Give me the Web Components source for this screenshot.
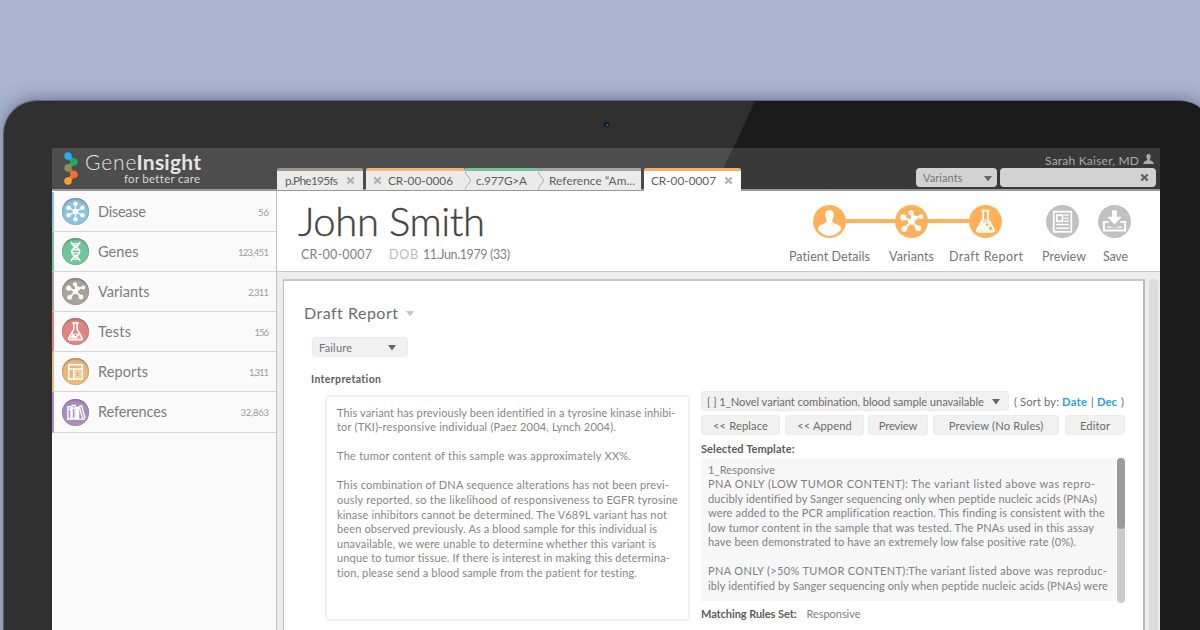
<!DOCTYPE html>
<html lang="en"><head><meta charset="utf-8"><title>GeneInsight</title>
<style>
html,body{margin:0;height:630px;width:1200px;overflow:hidden}
body{background:#a9b4d1;font-family:Lato,"Open Sans",sans-serif;color:#757575}
</style></head><body>
<gi-monitor></gi-monitor>
<script>
const ICONS={
disease:'<g fill="#fff" stroke="#fff" stroke-width="1.5"><path d="M16 16V7M16 16V25M16 16L8 11.5M16 16L24 11.5M16 16L8 20.5M16 16L24 20.5"/><circle cx="16" cy="16" r="2.6"/><g stroke="none"><circle cx="16" cy="6.8" r="2.7"/><circle cx="16" cy="25.2" r="2.7"/><circle cx="7.8" cy="11.5" r="2.7"/><circle cx="24.2" cy="11.5" r="2.7"/><circle cx="7.8" cy="20.5" r="2.7"/><circle cx="24.2" cy="20.5" r="2.7"/></g></g>',
genes:'<g fill="none" stroke="#fff" stroke-width="2"><path d="M11 4.5C11 11 21 10 21 16S11 21 11 27.5"/><path d="M21 4.5C21 11 12 10 11.5 16S21 21 21 27.5"/><path d="M12 7h8M13 9.5h6M13 14h6M12.5 17.5h7M13 22.5h6M12 25h8" stroke-width="1.4"/></g>',
variants:'<g fill="#fff" stroke="#fff" stroke-width="2"><path d="M15.5 16L8 11.5M15.5 16L9 23.5M15.5 16L23 22.5M15.5 16L18.5 12.5L15.5 6.8M18.5 12.5L25.5 11"/><g stroke="none"><circle cx="16" cy="16" r="3.2"/><circle cx="8" cy="12" r="3"/><circle cx="9" cy="23" r="2.9"/><circle cx="22.5" cy="22.5" r="2.9"/><circle cx="15.5" cy="7.5" r="2.5"/><circle cx="19.5" cy="12.5" r="2.3"/><circle cx="25.2" cy="11.3" r="2.3"/></g></g>',
flask:'<path d="M12.2 5.4h7.6M13.7 6v7.5L8 23.5Q7 26 9.5 26h13Q25 26 24 23.5L18.300 13.500V6" fill="none" stroke="#fff" stroke-width="1.8"/><path d="M12.500 17h7l4 7.500q-.5.500-1.500.500h-12q-1 0-1.500-.500z" fill="#fff"/><path d="M13.500 13.500h5l2 4h-9z" fill="#fff" fill-opacity=".5"/><circle cx="17.500" cy="19" r="1.400" fill="var(--d)"/><circle cx="21" cy="22.800" r="1.700" fill="var(--d)"/>',
tests:'<path d="M12.200 5.800h7.600M14 6v7.500L8.200 23.500Q7.200 25.800 9.500 25.800h13Q24.800 25.800 23.800 23.500L18 13.500V6" fill="none" stroke="#fff" stroke-width="1.900"/><path d="M12.500 18.500h7l3 5.800h-13z" fill="#fff"/><circle cx="16" cy="20" r="1.300" fill="var(--d)"/><circle cx="19.800" cy="22.500" r="1.500" fill="var(--d)"/>',
reports:'<g fill="none" stroke="#fff" stroke-width="1.800"><rect x="8" y="8" width="16" height="17"/><path d="M8 13h16M14 13v12" stroke-width="1.800"/><rect x="16.500" y="15.500" width="4.800" height="7" stroke-width="1.200" stroke-opacity=".6"/></g>',
references:'<g fill="none" stroke="#fff" stroke-width="1.600"><path d="M7 9h3.500v14H7zM12 7.500h3.500V23H12zM7 12.500h3.500M12 11h3.500"/><path d="M17 10h2.700v13H17z" fill="#fff"/><path d="M20.500 8.800l2.800-.8 3.800 14-2.800.8z"/><path d="M5.500 24h21.500" stroke-width="1.200"/></g>',
patient:'<path d="M16 5.200c3 0 4.400 2 4.100 5-.2 2.300-1 3-1.400 4.300-.3 1.800.5 2.600 2.300 3.400 3.300 1.300 6.200 2.100 6.200 5.600C24.800 27.300 20.500 29.800 16 29.800S7.200 27.300 4.800 23.500c0-3.500 2.900-4.300 6.200-5.600 1.800-.8 2.600-1.600 2.300-3.400-.4-1.300-1.200-2-1.400-4.300-.3-3 1.100-5 4.100-5z" fill="#fff"/>',
preview:'<g fill="none" stroke="#fff" stroke-width="1.700"><rect x="7.500" y="6.500" width="17" height="19.500"/><rect x="10.500" y="9.800" width="5.500" height="6"/><path d="M17.800 9.700h4.200M17.800 12.700h4.200M17.800 15.700h4.200M10 19h12M10 22.500h12" stroke-width="1.400"/></g>',
save:'<path d="M13.700 5h4.600v6.500h4.700L16 18.800l-7-7.300h4.700z" fill="#fff"/><path d="M10.300 16.500H5.700v8.200h20.600v-8.200H21.700" fill="none" stroke="#fff" stroke-width="2"/><path d="M8.500 20.800h3.500l4 1.500 4-1.500H23.500V22H8.500z" fill="#fff"/>'
};
class Base extends HTMLElement{
  paint(html){const t=document.createElement('template');t.innerHTML=html;this.attachShadow({mode:'open'}).append(t.content.cloneNode(true));}
}
/* A single line of text tracked to a fixed measure. */
class GiText extends Base{
  connectedCallback(){
    if(this.shadowRoot)return;
    this.paint(`<style>:host{display:block;white-space:pre;flex:none}span{display:inline-block}</style><span><slot></slot></span>`);
    const w=+this.getAttribute('w');
    if(!w)return;
    this.style.width=w+'px';
    const s=this.shadowRoot.querySelector('span');
    s.style.letterSpacing='0.001px';
    const n=[...this.textContent].length;
    s.style.letterSpacing=((w-s.getBoundingClientRect().width)/Math.max(1,n-1)).toFixed(3)+'px';
  }
}
class GiIcon extends Base{
  connectedCallback(){if(this.shadowRoot)return;
    const s=this.getAttribute('size'),c=this.getAttribute('color'),inset=this.hasAttribute('inset');
    this.paint(`<style>:host{display:block;flex:none;width:${s}px;height:${s}px;border-radius:50%;background:${c};--d:${c};${inset?'box-shadow:inset 0 1.5px 1.5px rgba(90,90,90,.45),inset 0 0 1px rgba(60,60,60,.5)':''}}svg{display:block}</style><svg width="${s}" height="${s}" viewBox="0 0 32 32">${ICONS[this.getAttribute('name')]}</svg>`);}
}
class GiX extends Base{
  connectedCallback(){if(this.shadowRoot)return;
    this.paint(`<style>:host{display:block;flex:none;width:9px;height:9px}svg{display:block}</style><svg width="9" height="9" viewBox="0 0 9 9"><path d="M1.300 1.500L7.700 7.500M7.700 1.500L1.300 7.500" stroke="${this.getAttribute('color')||'#b0b0b0'}" stroke-width="2.300"/></svg>`);}
}
class GiTri extends Base{
  connectedCallback(){if(this.shadowRoot)return;
    this.paint(`<style>:host{display:block;flex:none;width:8px;height:5.500px;position:relative;top:1px}svg{display:block}</style><svg width="8" height="5.500" viewBox="0 0 8 5.500"><path d="M0 0H8L4 5.500z" fill="${this.getAttribute('color')||'#666'}"/></svg>`);}
}
class GiLogo extends Base{
  connectedCallback(){this.paint(`<style>:host{display:flex;width:225px;padding:4px 0 0 12px;box-sizing:border-box;color:#e4e4e4}
svg{flex:none;margin-right:6px}.n{display:flex;font-size:21px;line-height:20px;height:20px;font-weight:300;margin-left:1px}.n gi-text{height:20px}.n b{font-weight:700}.t{font-size:11.500px;line-height:13px;margin-left:40px;color:#d8d8d8}</style>
<svg width="14" height="33" viewBox="0 0 14 33"><path d="M4 4L10 10" stroke="#1fa8b0" stroke-width="4"/><path d="M10 10L4 16" stroke="#4c9a50" stroke-width="4"/><path d="M4 16L10 22.500" stroke="#b07a3c" stroke-width="4"/><path d="M10 22.500L4 29" stroke="#f47a2a" stroke-width="4"/><circle cx="4" cy="4" r="3.700" fill="#2aaeea"/><circle cx="10" cy="10" r="3.700" fill="#24a860"/><circle cx="4" cy="16" r="3.700" fill="#968a4e"/><circle cx="10" cy="22.500" r="3.800" fill="#f26b3a"/><circle cx="4" cy="29" r="3.800" fill="#fba02c"/></svg>
<div><div class="n"><gi-text w="51.500">Gene</gi-text><b><gi-text w="64.500">Insight</gi-text></b></div><div class="t"><gi-text w="76">for better care</gi-text></div></div>`)}
}
class GiTabs extends Base{
  connectedCallback(){this.paint(`<style>:host{display:flex;padding-top:20px;height:23px;font-size:11.800px;color:#606060}
.tab{display:flex;align-items:center;box-sizing:border-box;height:22px;border-top:3px solid var(--c);background:#ebebeb;padding-left:var(--p);width:var(--w);margin-right:var(--m,0);gap:8px;border-radius:2px 2px 0 0}
.tab gi-text{line-height:19px}.seg{border-radius:0}.tab.on{background:#fff;height:24px}.tab.on>*{margin-top:-2px}.ch{margin-left:-7px;width:8px;height:19px;flex:none}.seg{gap:3px}</style>
<div class="tab" style="--c:#a0948b;--w:86px;--p:8px;--m:3px"><gi-text w="53">p.Phe195fs</gi-text><gi-x></gi-x></div>
<div class="tab" style="--c:#edb877;--w:99px;--p:7px"><gi-x></gi-x><gi-text w="65" style="margin-left:-2px">CR-00-0006</gi-text></div>
<div class="tab seg" style="--c:#74c396;--w:73px;--p:7px"><svg class="ch" viewBox="0 0 8 19"><path d="M0 0C0 4 5 6 5.500 9.500C5 13 0 15 0 19" fill="none" stroke="#aaa"/></svg><gi-text w="51">c.977G&gt;A</gi-text></div>
<div class="tab seg" style="--c:#a3a3a3;--w:103px;--p:7px;--m:3px"><svg class="ch" viewBox="0 0 8 19"><path d="M0 0C0 4 5 6 5.500 9.500C5 13 0 15 0 19" fill="none" stroke="#aaa"/></svg><gi-text w="86">Reference “Am...</gi-text></div>
<div class="tab on" style="--c:#f8b060;--w:97px;--p:7px"><gi-text w="65">CR-00-0007</gi-text><gi-x></gi-x></div>`)}
}
class GiSearch extends Base{
  connectedCallback(){this.paint(`<style>:host{display:block;margin-left:auto;width:240px;margin-right:4px;padding-top:5px;font-size:12px;color:#ababab}
.u{display:flex;justify-content:flex-end;gap:4px;padding-right:2px;line-height:15px;height:15px}
.s{display:flex;gap:3px}.s div{background:#d2d2d2;height:19px;border-radius:4px;box-sizing:border-box;display:flex;align-items:center;justify-content:space-between;color:#777;font-size:11px}.a{width:81px;padding:0 5px 0 7px}.b{width:156px;padding:0 7px}.b gi-x{margin-left:auto}</style>
<div class="u"><gi-text w="94">Sarah Kaiser, MD</gi-text><svg width="11" height="12" viewBox="0 0 11 12"><path d="M5.500 1C8.600 1 7.600 5 6.800 6V7.300C9 8 10.600 8.500 10.600 11H.4C.4 8.500 2 8 4.200 7.300V6C3.400 5 2.400 1 5.500 1z" fill="#ababab"/></svg></div>
<div class="s"><div class="a"><gi-text w="39.500">Variants</gi-text><gi-tri color="#666"></gi-tri></div><div class="b"><gi-x color="#5f5f5f"></gi-x></div></div>`)}
}
class GiNav extends Base{
  connectedCallback(){
    const rows=[['disease','#8cc3e0','Disease',48,'56',11],['genes','#70c59b','Genes',40.500,'123,451',31],['variants','#a9a29b','Variants',51.500,'2,311',21],['tests','#de8681','Tests',33,'156',14.500],['reports','#eab877','Reports',50,'1,311',20],['references','#ab8dbf','References',69,'32,863',28.500]];
    this.paint(`<style>:host{display:block;width:224px;flex:none;background:#fafafa;border-right:1px solid #c4c4c4;padding-top:1px}
.r{display:flex;align-items:center;box-sizing:border-box;height:40.100px;border-bottom:1px solid #d6d6d6;border-left:2px solid var(--c);padding:0 7px 0 8px;font-size:14.500px;color:#7c7c7c}
.r>gi-text:nth-child(2){margin-left:9px;line-height:20px}.r>.n{margin-left:auto;font-size:9.600px;line-height:14px;color:#9c9c9c;padding-top:2px}</style>`+rows.map(r=>`<div class="r" style="--c:${r[1]}"><gi-icon name="${r[0]}" size="27" color="${r[1]}" inset></gi-icon><gi-text w="${r[3]}">${r[2]}</gi-text><gi-text class="n" w="${r[5]}">${r[4]}</gi-text></div>`).join(''))}
}
class GiPatient extends Base{
  connectedCallback(){
    const st=(n,c,l,w,m,d=0)=>`<div class="s" style="margin-left:${m}px;width:${w}px"><gi-icon name="${n}" size="33" color="${c}" style="margin-right:${d*2}px"></gi-icon><gi-text w="${w}">${l}</gi-text></div>`;
    this.paint(`<style>:host{display:flex;height:80px;background:#fff;border-bottom:1px solid #c9c9c9;position:relative}
.p{padding-left:21px;width:512px;box-sizing:border-box;flex:none}.p h1{font:300 40px/50px Lato,sans-serif;-webkit-text-stroke:.35px #444;margin:5px 0 0;color:#444;height:50px}
.i{display:flex;font-size:12.500px;line-height:17px;padding-left:3px;color:#808080}
.st{display:flex;padding-top:14px;position:relative}.s{display:flex;flex-direction:column;align-items:center;gap:10px;font-size:12.500px;line-height:17px;color:#757575;position:relative}
.line{position:absolute;left:41px;width:156px;top:28px;height:4px;background:#feb159}</style>
<div class="p"><h1><gi-text w="187">John Smith</gi-text></h1><div class="i"><gi-text w="71">CR-00-0007</gi-text><gi-text w="29" style="margin-left:17px;color:#bbb">DOB</gi-text><gi-text w="87" style="margin-left:5px">11.Jun.1979 (33)</gi-text></div></div>
<div class="st"><div class="line"></div>${st('patient','#feb159','Patient Details',81,0,.5)}${st('variants','#feb159','Variants',45,19)}${st('flask','#feb159','Draft Report',74,15,1)}${st('preview','#c1c1c1','Preview',44,19,2)}${st('save','#c1c1c1','Save',25,17,1)}</div>`)}
}
class GiEditor extends Base{
  connectedCallback(){
    const L=[['This variant has previously been identified in a tyrosine kinase inhibi-',338.500],['tor (TKI)-responsive individual (Paez 2004, Lynch 2004).',279],0,['The tumor content of this sample was approximately XX%.',294],0,['This combination of DNA sequence alterations has not been previ-',332],['ously reported, so the likelihood of responsiveness to EGFR tyrosine',341],['kinase inhibitors cannot be determined. The V689L variant has not',330],['been observed previously. As a blood sample for this individual is',320],['unavailable, we were unable to determine whether this variant is',319],['unque to tumor tissue. If there is interest in making this determina-',333],['tion, please send a blood sample from the patient for testing.',300]];
    this.paint(`<style>:host{display:block;width:378px;flex:none;color:#757575;font-size:11px}
h2{display:flex;align-items:center;gap:8px;font:400 16px/20px Lato,sans-serif;margin:22px 0 0 -7px;color:#6c6c6c}
.sel{display:flex;align-items:center;justify-content:space-between;margin:14px 0 0 1px;width:96px;height:20px;box-sizing:border-box;padding:0 11px 0 6px;background:#f1f1f1;border:1px solid #ececec;border-radius:3px}
h3{font:700 10.500px/14px Lato,sans-serif;margin:15px 0 0;color:#5c5c5c}
.box{box-sizing:border-box;margin:9px 0 0 14px;width:365px;height:226px;border:2px solid #efefef;border-radius:4px;padding:8.500px 0 0 10px;line-height:14.600px;color:#858585}.e{height:14.600px}</style>
<h2><gi-text w="94">Draft Report</gi-text><gi-tri color="#c8c8c8"></gi-tri></h2>
<div class="sel"><gi-text w="33">Failure</gi-text><gi-tri></gi-tri></div>
<h3><gi-text w="70">Interpretation</gi-text></h3>
<div class="box">${L.map(l=>l?`<gi-text w="${l[1]}">${l[0]}</gi-text>`:'<div class="e"></div>').join('')}</div>`)}
}
class GiTemplates extends Base{
  connectedCallback(){
    const L=[['1_Responsive',67],['PNA ONLY (LOW TUMOR CONTENT): The variant listed above was repro-',387],['ducibly identified by Sanger sequencing only when peptide nucleic acids (PNAs)',389],['were added to the PCR amplification reaction. This finding is consistent with the',397],['low tumor content in the sample that was tested. The PNAs used in this assay',386],['have been demonstrated to have an extremely low false positive rate (0%).',368],0,['PNA ONLY (&gt;50% TUMOR CONTENT):The variant listed above was reproduc-',399],['ibly identified by Sanger sequencing only when peptide nucleic acids (PNAs) were',400]];
    const B=[['&lt;&lt; Replace',79,55,5],['&lt;&lt; Append',79,54.500,4],['Preview',60,38.500,5],['Preview (No Rules)',126,94.500,6],['Editor',60,30,0]];
    this.paint(`<style>:host{display:block;padding:110px 0 0 12px;font-size:11.200px;color:#6c6c6c}
.r{display:flex;align-items:center;height:20px}.f{box-sizing:border-box;background:#f1f1f1;border:1px solid #ececec;border-radius:3px;display:flex;align-items:center;height:20px}
.big{width:308px;padding:0 8px 0 5px;justify-content:space-between;margin-right:5px}.b{justify-content:center}.l{color:#2a9fd8;font-weight:700}
h3{font:700 11px/14px Lato,sans-serif;margin:7px 0 0;color:#5c5c5c;display:flex}
.t{display:flex;margin-top:2px;height:144px}.x{width:415px;box-sizing:border-box;background:#f7f7f7;padding:4.500px 0 0 7px;line-height:14.550px;color:#808080;height:143px;font-size:11px}.e{height:14.550px}
.sb{width:8px;margin-left:1px;background:#cbcbcb;border-radius:4px;height:145px}.sb div{height:71px;background:#9c9c9c;border-radius:4px}</style>
<div class="r"><div class="f big"><gi-text w="277">[ ] 1_Novel variant combination, blood sample unavailable</gi-text><gi-tri></gi-tri></div><gi-text w="45">( Sort by:</gi-text><gi-text class="l" w="25" style="margin-left:3px">Date</gi-text><gi-text style="margin:0 3px 0 4px;width:3px">|</gi-text><gi-text class="l" w="20">Dec</gi-text><gi-text style="margin-left:4px">)</gi-text></div>
<div class="r" style="margin-top:4px">${B.map(b=>`<div class="f b" style="width:${b[1]}px;margin-right:${b[3]}px"><gi-text w="${b[2]}">${b[0]}</gi-text></div>`).join('')}</div>
<h3><gi-text w="93.500">Selected Template:</gi-text></h3>
<div class="t"><div class="x">${L.map(l=>l?`<gi-text w="${l[1]}">${l[0]}</gi-text>`:'<div class="e"></div>').join('')}</div><div class="sb"><div></div></div></div>
<h3 style="margin-top:5px"><gi-text w="95.500">Matching Rules Set:</gi-text><gi-text w="54" style="margin-left:10px;font-weight:400;color:#808080">Responsive</gi-text></h3>`)}
}
class GiMonitor extends Base{
  connectedCallback(){this.paint(`<style>:host{display:block;box-sizing:border-box;width:1210px;height:540px;margin:100px 0 0 3px;padding:47px 0 0 48px;position:relative;background:#303030;border-radius:34px 34px 0 0/34px 34px 0 0;border-top:1.500px solid #63676a;border-left:1px solid #5b5e62;box-shadow:0 -2px 16px rgba(60,70,100,.5)}
:host::before{content:"";position:absolute;inset:0;border-radius:inherit;background:#1a1a1a;clip-path:polygon(751px 0,100% 0,100% 100%,507px 100%)}
.cam{position:absolute;left:599px;top:20px;width:5px;height:5px;border-radius:50%;background:#151515;border:1px solid #1d3146}
.cam::after{content:"";position:absolute;left:2px;top:2px;width:2px;height:2px;background:#2b5688}
.scr{position:relative;width:1108px;height:483px;background:#f0f0f0;overflow:hidden;display:flex;flex-direction:column}
.h{position:relative;display:flex;height:43px;flex:none;background:#4d4d4d;box-sizing:border-box;border-bottom:2px solid #999}
.h::before{content:"";position:absolute;inset:0;background:#393939;clip-path:polygon(681px 0,100% 0,100% 100%,662px 100%)}
.h>*{position:relative;z-index:1}
.b{display:flex;flex:1}.m{flex:1}.c{display:flex;padding:7px 3px 0 6px;background:#ededed;gap:4px;height:360px}
.card{display:flex;box-sizing:border-box;width:862px;background:#fff;border:1px solid #bcbcbc;border-top:2px solid #c6c6c6;border-right:2px solid #bbb;border-bottom:0;padding-left:27px}
.sc{width:9px;background:#dcdcdc;border-radius:5px 5px 0 0}</style>
<div class="cam"></div>
<div class="scr"><div class="h"><gi-logo></gi-logo><gi-tabs></gi-tabs><gi-search></gi-search></div>
<div class="b"><gi-nav></gi-nav><div class="m"><gi-patient></gi-patient><div class="c"><div class="card"><gi-editor></gi-editor><gi-templates></gi-templates></div><div class="sc"></div></div></div></div></div>`)}
}
for(const [n,c] of Object.entries({'gi-text':GiText,'gi-icon':GiIcon,'gi-x':GiX,'gi-tri':GiTri,'gi-logo':GiLogo,'gi-tabs':GiTabs,'gi-search':GiSearch,'gi-nav':GiNav,'gi-patient':GiPatient,'gi-editor':GiEditor,'gi-templates':GiTemplates,'gi-monitor':GiMonitor}))customElements.define(n,c);
</script></body></html>
